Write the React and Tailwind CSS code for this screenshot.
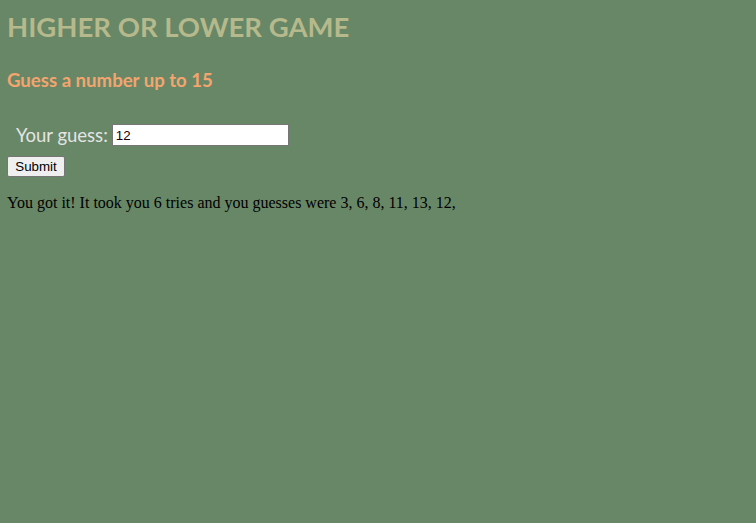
export default function App() {
  return (
    <div className="min-h-[523px] w-full bg-[#688767] px-[7px] pt-[1px]">
      <h1 className="mt-[10px] text-[27.5px] font-bold leading-[32px] text-[#b6b98b] [font-family:Lato,'Open_Sans',sans-serif]">
        HIGHER OR LOWER GAME
      </h1>
      <h3 className="mt-[26px] text-[18.6px] font-bold leading-[22px] text-[#f4a56e] [font-family:Lato,'Open_Sans',sans-serif]">
        Guess a number up to 15
      </h3>
      <div className="mt-[31px] flex h-[26px] items-center">
        <label className="ml-[9px] text-[18.5px] leading-[24px] text-[#e4e4e4] [font-family:Lato,'Open_Sans',sans-serif]">
          Your guess:
        </label>
        <input
          defaultValue="12"
          className="ml-[4px] box-border h-[22px] w-[177px] border border-[#767676] bg-white px-[3px] text-[13.33px] text-[#200000] [font-family:'Liberation_Sans',Arial,sans-serif]"
        />
      </div>
      <button className="mt-[8px] block box-border h-[21px] w-[58px] rounded-[2px] border border-[#767676] bg-[#efefef] text-[13.33px] leading-[18px] text-black [font-family:'Liberation_Sans',Arial,sans-serif]">
        Submit
      </button>
      <p className="mt-[16px] text-[16px] leading-[20px] text-black [font-family:'Liberation_Serif','Times_New_Roman',serif]">
        You got it! It took you 6 tries and you guesses were 3, 6, 8, 11, 13, 12,
      </p>
    </div>
  );
}
